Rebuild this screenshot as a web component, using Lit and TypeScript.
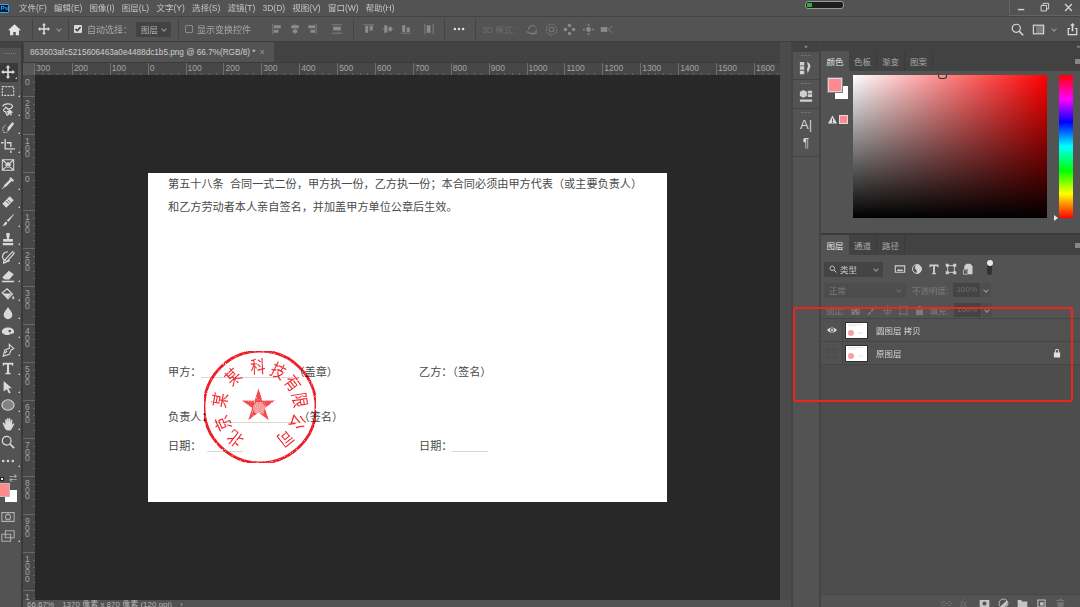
import { LitElement, html, css, svg } from 'lit';
import { customElement } from 'lit/decorators.js';

const ic = (body: unknown, size = 14) => html`<svg class="ic" width=${size} height=${size} viewBox="0 0 16 16" fill="currentColor">${body}</svg>`;

const moveGlyph = svg`<path d="M8 0l2.600 3H9v4h4V5.400l3 2.600-3 2.600V9H9v4h1.600L8 16l-2.600-3H7V9H3v1.600L0 8l3-2.600V7h4V3H5.400z"/>`;

const TOOLS: { icon: unknown; more?: boolean; on?: boolean }[] = [
  { icon: moveGlyph, more: true, on: true },
  { icon: svg`<rect x="1.500" y="3" width="13" height="10" fill="none" stroke="currentColor" stroke-width="1.300" stroke-dasharray="2.200 1.300"/>`, more: true },
  { icon: svg`<path d="M2 5c1-3 9-4 11-1 1 2-2 4-6 4.500M4 8c-2 1-1 3 1 3l2 4 2-1-1.500-3 4 0-6-5z" fill="none" stroke="currentColor" stroke-width="1.400"/><path d="M9 8l5 4-2.500.5 1 2.500-1.500.5-1-2.500L8 14z"/>`, more: true },
  { icon: svg`<path d="M5 5c-3 1-4 5-2 8 2 1 5 0 6-3" fill="none" stroke="currentColor" stroke-width="1" stroke-dasharray="2 1"/><path d="M13 1l2 2-5 7-3 1 1-4z"/>`, more: true },
  { icon: svg`<path d="M4 0h1.500v10.500H16V12H4zM0 3.500h3V5H0zM6.500 3.500H12V9h-1.500V5h-4zM10.500 13H12v3h-1.500z"/>`, more: true },
  { icon: svg`<path d="M1.500 2h13v12h-13z M1.500 2l13 12M14.500 2l-13 12M5 8l3-3 3 3-3 3z" fill="none" stroke="currentColor" stroke-width="1.200"/>` },
  { icon: svg`<path d="M11 1l4 4-2 1.500-.8-.8L6 12l-3 1.500-1 1.500-1-1 1.500-1L4 10l6.300-6.200-.8-.8z"/>`, more: true },
  { icon: svg`<path d="M10 1.500l4.500 4.500L6 14.500 1.500 10z"/><path d="M6 7l3 3M8 5.500l3 3" stroke="#535353" stroke-width="1" fill="none"/>`, more: true },
  { icon: svg`<path d="M14.500 1l.5.500-6.500 8.500-2-1.500zM5.500 9.800l1.700 1.300C7 13.500 4 15 1.500 14.800 3.500 14 3.500 11 5.500 9.800z"/>`, more: true },
  { icon: svg`<path d="M6 1h4v2.500L9 8h4.500v3h-11V8H7L6 3.500zM2 12.500h12V15H2z"/>`, more: true },
  { icon: svg`<path d="M8 2c-4 0-7 3-6 7s6 5 8 3M3 13L13 2c1 0 2 1 2 2L6 14l-3 1z" fill="none" stroke="currentColor" stroke-width="1.300"/>`, more: true },
  { icon: svg`<path d="M9 2l5.500 4-5 6H4L1.500 9.500zM1 13.500h14V15H1z"/>`, more: true },
  { icon: svg`<path d="M1.500 6.500L7 2l6 6-5 5.500z" fill="none" stroke="currentColor" stroke-width="1.400"/><path d="M3 7.500h9l-4.500 5zM14 10c1.500 2 1.500 4 0 4s-1.500-2 0-4z"/>`, more: true },
  { icon: svg`<path d="M8 1c2 3.500 5 6 5 9a5 5 0 0 1-10 0c0-3 3-5.500 5-9z"/>`, more: true },
  { icon: svg`<path d="M1 9c0-3 3-5 7-5s7 2 7 5c0 1-1 2-2 2l-2 0c-1 2-7 2-8 0-1 0-2-1-2-2z"/><circle cx="10" cy="8" r="1.500" fill="#535353"/>`, more: true },
  { icon: svg`<path d="M9.500 1.500l5 5-3 1.500-2 5-7 2 2-7 5-2zM4.500 11.500L7 9" fill="none" stroke="currentColor" stroke-width="1.300"/>`, more: true },
  { icon: svg`<path d="M2 2h12v3.500h-1.200c-.3-1-.8-1.500-2-1.500H9.200v8.500c0 1 .5 1.200 1.800 1.200V15H5v-1.300c1.300 0 1.800-.2 1.800-1.200V4H5.200c-1.200 0-1.700.5-2 1.500H2z"/>`, more: true },
  { icon: svg`<path d="M3 1l9.500 8.500H8.500l2.500 5-2 1-2.300-5L3 13z"/>`, more: true },
  { icon: svg`<ellipse cx="8" cy="8" rx="7" ry="6" fill="currentColor" fill-opacity=".35" stroke="currentColor" stroke-width="1.200"/>`, more: true },
  { icon: svg`<path d="M7 1c1 0 1 .5 1.200 1.500L8.500 6V2c0-1.300 2-1.300 2 0v4.500l.7-3c.3-1.200 2-.8 1.800.4L12.500 9l1-1.300c1-1 2.300 0 1.500 1L12 14c-.7 1-1.500 1.500-3 1.500C6.500 15.500 5 14.500 4 12L2 7.500c-.5-1.200 1-1.800 1.600-.8L5 9 4.800 3.500c0-1.300 1.800-1.300 2 0L7 6z"/>`, more: true },
  { icon: svg`<circle cx="6.500" cy="6.500" r="5" fill="none" stroke="currentColor" stroke-width="1.400"/><path d="M10 10l5 5" stroke="currentColor" stroke-width="2" fill="none"/>` },
  { icon: svg`<circle cx="2.500" cy="8" r="1.400"/><circle cx="8" cy="8" r="1.400"/><circle cx="13.500" cy="8" r="1.400"/>`, more: true },
];

const MENU = ['文件(F)', '编辑(E)', '图像(I)', '图层(L)', '文字(Y)', '选择(S)', '滤镜(T)', '3D(D)', '视图(V)', '窗口(W)', '帮助(H)'];
const HRULER = ['300', '200', '100', '0', '100', '200', '300', '400', '500', '600', '700', '800', '900', '1000', '1100', '1200', '1300', '1400', '1500', '1600'];
const VRULER = ['200', '100', '0', '100', '200', '300', '400', '500', '600', '700', '800', '900', '1000', '1'];

// seal characters with the angle each one sits at, read off the stamp
const SEAL: [string, number][] = [['北', -142], ['京', -114], ['某', -80], ['某', -42], ['科', -3], ['技', 27], ['有', 54], ['限', 80], ['公', 111], ['司', 141]];

const bar = (x: number, y: number, w: number, h: number) => svg`<rect x=${x} y=${y} width=${w} height=${h}/>`;
const ALIGN = [
  [bar(2, 1, 1, 14), bar(4, 3, 9, 4), bar(4, 9, 6, 4)],
  [bar(7.5, 1, 1, 14), bar(3, 3, 10, 4), bar(5, 9, 6, 4)],
  [bar(13, 1, 1, 14), bar(3, 3, 9, 4), bar(6, 9, 6, 4)],
  [bar(1, 2, 14, 1), bar(3, 5, 10, 5), bar(1, 13, 14, 1)],
  [bar(1, 2, 14, 1), bar(3, 4, 4, 9), bar(9, 4, 4, 6)],
  [bar(1, 7.5, 14, 1), bar(3, 3, 4, 10), bar(9, 5, 4, 6)],
  [bar(1, 13, 14, 1), bar(3, 3, 4, 9), bar(9, 6, 4, 6)],
  [bar(2, 1, 1, 14), bar(5, 3, 5, 10), bar(13, 1, 1, 14)],
];
const TD = [
  svg`<path d="M3 8a5 5 0 0 1 9-3M13 8a5 5 0 0 1-9 3M1 10c0 3 9 5 13 2" fill="none" stroke="currentColor" stroke-width="1"/>`,
  svg`<circle cx="8" cy="8" r="6.500" fill="none" stroke="currentColor" stroke-width="1" stroke-dasharray="2 1"/><circle cx="8" cy="8" r="3" fill="none" stroke="currentColor"/>`,
  svg`<circle cx="8" cy="3" r="2.200"/><circle cx="8" cy="13" r="2.200"/><circle cx="3" cy="8" r="2.200"/><circle cx="13" cy="8" r="2.200"/>`,
  svg`<path d="M8 1l2 2H6zM8 15l2-2H6zM1 8l2-2v4zM15 8l-2-2v4z"/><circle cx="8" cy="8" r="3"/>`,
  svg`<rect x="1" y="5" width="8" height="6"/><path d="M10 8l5-4M10 8l5 4" stroke="currentColor" fill="none"/>`,
];
const LOCK = svg`<path d="M4.500 7V5a3.500 3.500 0 0 1 7 0v2H13v8H3V7zM6 7h4V5a2 2 0 0 0-4 0z"/>`;
const FILTERS = [
  svg`<path d="M1 3h14v10H1zM2.500 4.500v7h11v-7zM3.500 10.500l3-3 2 2 1.500-1.500 2.500 2.500z" fill-rule="evenodd"/>`,
  svg`<circle cx="8" cy="8" r="6" fill="none" stroke="currentColor" stroke-width="1.300"/><path d="M8 2a6 6 0 0 1 0 12c-2-1 1-3-1-5s-3-4 1-7z"/>`,
  svg`<path d="M2 2h12v3.500h-1.200c-.3-1-.8-1.300-2-1.300H9.200v8.500c0 .8.500 1 1.500 1V15H5.300v-1.300c1 0 1.500-.2 1.500-1V4.200H5.200c-1.200 0-1.700.3-2 1.300H2z"/>`,
  svg`<path d="M3.500 3.500h9v9h-9z" fill="none" stroke="currentColor" stroke-width="1.200"/><path d="M1 1h4v4H1zM11 1h4v4h-4zM1 11h4v4H1zM11 11h4v4h-4z"/>`,
  svg`<path d="M6 1h5l3 3v11H8V8H3V4z"/><path d="M2 9h5v6H2z" fill="none" stroke="currentColor"/>`,
];
const LOCKS = [
  svg`<path d="M2 3h12v11H2zM3.500 4.500v2h2v-2zM7 4.500v2h2v-2zM10.500 4.500v2h2v-2zM3.500 8v2h2V8zM10.500 8v2h2V8zM7 11v2h2v-2z" fill-rule="evenodd"/>`,
  svg`<path d="M14.500 1l.5.500-6.500 8.500-2-1.500zM5.500 9.800l1.700 1.300C7 13.500 4 15 1.500 14.800 3.500 14 3.500 11 5.500 9.800z"/>`,
  svg`<path d="M7.500 1h1v6.500H15v1H8.500V15h-1V8.500H1v-1h6.500z"/><path d="M4 4h8v8H4z" fill="none" stroke="currentColor"/>`,
  svg`<path d="M3 1v14M13 1v14M1 3h14M1 13h14" fill="none" stroke="currentColor" stroke-width="1.200"/>`,
  LOCK,
];
const FOOT = [
  svg`<path d="M6 5H4a3 3 0 0 0 0 6h2M10 5h2a3 3 0 0 1 0 6h-2M5 8h6" fill="none" stroke="currentColor" stroke-width="1.300"/>`,
  null,
  svg`<path d="M1 3h14v10H1zM8 5a3 3 0 1 0 0 6 3 3 0 0 0 0-6z" fill-rule="evenodd"/>`,
  svg`<circle cx="8" cy="8" r="6.500" fill="none" stroke="currentColor" stroke-width="1.300"/><path d="M12.500 3.500A6.500 6.500 0 0 1 3.500 12.500z"/>`,
  svg`<path d="M1 3h5l1.500 2H15v9H1z"/>`,
  svg`<path d="M2 2h12v12H2zM3.500 3.500v9h9v-9zM6 6h5v5H6z" fill-rule="evenodd"/>`,
  svg`<path d="M6 1h4v2h4v1.500H2V3h4zM3 6h10l-1 9H4z"/>`,
];

const starPoints = (cx: number, cy: number, R: number, r: number) =>
  Array.from({ length: 10 }, (_, i) => {
    const a = (i * Math.PI) / 5;
    const d = i % 2 ? r : R;
    return `${(cx + d * Math.sin(a)).toFixed(1)},${(cy - d * Math.cos(a)).toFixed(1)}`;
  }).join(' ');

@customElement('app-root')
export class AppRoot extends LitElement {
  static styles = css`
    :host {
      display: block;
      width: 1080px;
      height: 607px;
      overflow: hidden;
      font-family: "Liberation Sans", "Noto Sans CJK SC", sans-serif;
      font-size: 8.500px;
      color: #c4c4c4;
      background: #535353;
    }
    .app { width: 1080px; height: 607px; display: flex; flex-direction: column; position: relative; filter: blur(0.4px); }
    .ic { display: block; flex: none; }

    .menubar { height: 16px; flex: none; display: flex; align-items: center; background: #535353; border-bottom: 1px solid #434343; position: relative; }
    .ps { width: 9px; height: 9px; background: #001e36; color: #31a8ff; font-size: 6px; font-weight: bold; border: 1px solid #31a8ff; border-left: 0; border-radius: 0 2px 2px 0; display: flex; align-items: center; justify-content: flex-end; line-height: 1; box-sizing: border-box; margin-right: 10px; overflow: hidden; flex: none; }
    .menu { display: flex; gap: 7.200px; white-space: nowrap; line-height: 16px; }
    .battery { position: absolute; left: 805px; top: 1px; width: 39px; height: 8px; box-sizing: border-box; border: 1px solid #9a9a9a; border-radius: 3px; background: #1d1d1d; display: flex; padding: 1px; }
    .battery i { width: 5px; background: #2fae3c; }
    .winctl { margin-left: auto; width: 71px; height: 16px; flex: none; display: flex; align-items: center; justify-content: space-around; border-left: 1px solid #646464; border-bottom: 1px solid #646464; box-sizing: border-box; color: #d6d6d6; }

    .options { height: 25px; flex: none; display: flex; align-items: center; background: #535353; border-bottom: 1px solid #3e3e3e; box-sizing: border-box; position: relative; }
    .sep { width: 1px; height: 20px; background: #434343; flex: none; }
    .home { margin: 0 11px 0 8px; color: #e4e4e4; }
    .movebtn { margin: 0 7px 0 5px; color: #ddd; }
    .chev { width: 3px; height: 3px; border-right: 1px solid #999; border-bottom: 1px solid #999; transform: rotate(45deg); flex: none; }
    .check { width: 8px; height: 8px; border-radius: 1px; background: #d8d8d8; color: #333; flex: none; display: flex; align-items: center; justify-content: center; }
    .check.off { background: transparent; border: 1px solid #8a8a8a; box-sizing: border-box; }
    .select { display: flex; align-items: center; background: #434343; height: 15px; box-sizing: border-box; padding: 0 5px; flex: none; }
    .opt-label { color: #a8a8a8; white-space: nowrap; flex: none; font-size: 9px; }
    .layer-select { width: 35px; color: #b4b4b4; }
    .layer-select .chev { margin-left: auto; }
    .tdlabel { width: 44px; margin-left: 6px; white-space: nowrap; color: #6f6f6f; flex: none; }
    .tdicons { display: flex; gap: 5.500px; color: #8a8a8a; }
    .aligns { display: flex; color: #8c8c8c; flex: none; }
    .dots { margin: 0 10px 0 8px; color: #e0e0e0; }
    .right-tools { margin-left: auto; display: flex; align-items: center; gap: 8px; color: #dcdcdc; padding-right: 1.500px; }
    .right-tools .chev { margin: 0 2px 0 -1px; }

    .workspace { flex: 1; display: flex; min-height: 0; }
    .toolbar { width: 21px; flex: none; display: flex; flex-direction: column; align-items: stretch; border-right: 2px solid #3a3a3a; background: #535353; }
    .toolhead { height: 21px; flex: none; background: linear-gradient(#424242 0 6px, #535353 6px); position: relative; }
    .toolhead::after { content: ""; position: absolute; left: 3px; right: 5px; top: 11px; border-top: 1px dotted #7a7a7a; }
    .tool { height: 18.500px; flex: none; display: flex; align-items: center; justify-content: center; color: #d9d9d9; position: relative; padding-right: 5px; box-sizing: border-box; }
    .tool.on { background: #3a3a3a; margin-right: 3px; padding-right: 2px; }
    .tool.more::after { content: ""; position: absolute; right: 1px; bottom: 3px; border: 1px solid transparent; border-right-color: #ccc; border-bottom-color: #ccc; }
    .swap { height: 12px; margin-top: 3px; display: flex; align-items: center; justify-content: space-between; padding: 0 4px 0 0; }
    .swap i { width: 4px; height: 4px; background: #e8e8e8; border: 1px solid #222; box-sizing: border-box; }
    .swap b { font-size: 8px; font-weight: normal; color: #d0d0d0; line-height: 1; }
    .colors { height: 20px; flex: none; margin-top: -2px; }
    .colors .fg { width: 10px; height: 14px; background: #ff8a8e; border: 1px solid #bdbdbd; border-left: 0; box-sizing: border-box; position: relative; z-index: 1; }
    .colors .bg { width: 12px; height: 12px; background: #fff; margin: -7px 0 0 5px; }
    .tool.small { color: #b0b0b0; }
    .mask { margin-top: 5px; }

    .docarea { width: 757px; flex: none; display: flex; flex-direction: column; background: #424242; }
    .tabs { height: 20px; flex: none; display: flex; background: #424242; }
    .tab { width: 250px; margin-left: 1px; box-sizing: border-box; background: #535353; display: flex; align-items: center; padding: 0 6px; white-space: nowrap; gap: 4px; color: #cfcfcf; font-size: 8.200px; }
    .tab span { color: #999; font-size: 9px; }
    .hruler { height: 13px; flex: none; display: flex; background: #474747; border-top: 1px solid #3a3a3a; box-sizing: border-box; overflow: hidden; }
    .corner { width: 11px; flex: none; background: #585858; }
    .rcell { width: 37.900px; flex: none; box-sizing: border-box; border-left: 1px solid #6e6e6e; padding-left: 1px; font-size: 8.500px; line-height: 11px; color: #a4a4a4; background: repeating-linear-gradient(90deg, transparent 0 6.580px, #666 6.580px 7.580px) 0 100% / 100% 2px no-repeat; }
    .mid { flex: 1; display: flex; min-height: 0; }
    .vruler { width: 12px; flex: none; background: #474747; display: flex; flex-direction: column; overflow: hidden; }
    .vcell { flex: none; height: 38px; box-sizing: border-box; border-top: 1px solid #686868; padding: 3px 0 0 2px; font-size: 8.500px; line-height: 6.700px; color: #a4a4a4; background: repeating-linear-gradient(180deg, transparent 0 6.600px, #666 6.600px 7.600px) 100% 0 / 2px 100% no-repeat; }
    .vcell.first { height: 21px; border-top: 0; padding-top: 4px; }
    .canvas { flex: 1; background: #282828; padding: 98px 0 0 113px; box-sizing: border-box; overflow: hidden; }
    .status { height: 7px; flex: none; background: #515151; display: flex; gap: 8px; padding-left: 4px; font-size: 8px; line-height: 9px; color: #b4b4b4; white-space: nowrap; overflow: hidden; }

    .doc { width: 519px; height: 329px; background: #fff; position: relative; box-sizing: border-box; padding-left: 20px; font-size: 11.150px; color: #4a4a4a; }
    .doc p { margin: 0; line-height: 23px; white-space: nowrap; }
    .sign { display: grid; grid-template-columns: 251px 1fr; line-height: 23px; height: 23px; white-space: nowrap; }
    .sign.a { margin-top: 141.500px; }
    .sign.b { margin-top: 22px; }
    .sign.c { margin-top: 6px; }
    .line { display: inline-block; height: 10px; border-bottom: 1px solid #d8d8d8; vertical-align: -2px; }
    .seal { position: absolute; left: 51.500px; top: 173.500px; mix-blend-mode: multiply; }

    .gutter { width: 11px; flex: none; background: #4b4b4b; display: flex; align-items: flex-end; }
    .gutter::after { content: ""; width: 100%; height: 7px; background: #515151; }
    .dockcol { width: 30px; flex: none; display: flex; flex-direction: column; background: #444; border-left: 2px solid #444; border-right: 2px solid #444; box-sizing: border-box; }
    .collapse { height: 9px; flex: none; background: #424242; color: #bbb; font-size: 6px; line-height: 8px; text-align: center; margin-bottom: 1px; }
    .dgroup { background: #535353; display: flex; flex-direction: column; align-items: center; gap: 6px; padding: 9px 0 4px; margin-bottom: 1px; box-sizing: border-box; color: #d0d0d0; flex: none; position: relative; }
    .dgroup::before { content: ""; position: absolute; top: 3px; left: 8px; right: 8px; border-top: 1px dotted #7a7a7a; }
    .dgroup.fill { flex: 1; margin: 0; padding: 0; }
    .dgroup.fill::before { display: none; }
    .dgroup b { font: 13px "Liberation Sans", sans-serif; line-height: 13px; color: #d8d8d8; }

    .panels { flex: 1; display: flex; flex-direction: column; min-width: 0; }
    .ptop { height: 9px; flex: none; background: #424242; color: #bbb; font-size: 6px; line-height: 8px; text-align: right; }
    .ptabs { height: 20px; flex: none; display: flex; background: #424242; position: relative; align-items: stretch; }
    .ptab { width: 28px; display: flex; align-items: center; justify-content: center; color: #a8a8a8; border-right: 1px solid #3a3a3a; box-sizing: border-box; }
    .ptab.on { background: #535353; color: #e4e4e4; border-right: 0; }
    .pmenu { margin-left: auto; width: 5px; height: 5px; background: #868686; align-self: center; }
    .color { height: 162px; flex: none; background: #535353; display: flex; border-bottom: 2px solid #3a3a3a; }
    .swatches { width: 32px; flex: none; padding: 7px 0 0 7px; box-sizing: border-box; }
    .sw-fg { width: 14px; height: 14px; background: #ff8a8e; border: 1px solid #d8d8d8; outline: 1px solid #808080; box-sizing: border-box; position: relative; z-index: 1; }
    .sw-bg { width: 13px; height: 13px; background: #fff; margin: -6px 0 0 7px; }
    .warn { display: flex; align-items: center; gap: 2px; margin-top: 16px; color: #e0e0e0; }
    .warn i { width: 9px; height: 9px; background: #ff8a8e; border: 1px solid #ddd; box-sizing: border-box; }
    .field { width: 194px; height: 143px; margin-top: 4px; flex: none; position: relative; background: linear-gradient(to top, #000, transparent), linear-gradient(to right, #fff, #f00); }
    .pick { position: absolute; left: 85px; top: -1px; width: 7px; height: 4px; border: 1px solid #333; border-top: 0; border-radius: 0 0 3px 3px; }
    .hue { width: 14px; height: 143px; margin: 4px 0 0 12px; flex: none; position: relative; background: linear-gradient(to bottom, #f00, #f0f 17%, #00f 33%, #0ff 50%, #0f0 67%, #ff0 83%, #f00); }
    .hue i { position: absolute; left: -5px; bottom: -3px; border-left: 4px solid #e8e8e8; border-top: 3px solid transparent; border-bottom: 3px solid transparent; }

    .layers { flex: 1; background: #535353; display: flex; flex-direction: column; min-height: 0; }
    .lrow { display: flex; align-items: center; height: 14px; margin-top: 7px; flex: none; padding-left: 3px; color: #7c7c7c; white-space: nowrap; }
    .lrow.locks { margin-top: 6px; padding-left: 5px; }
    .lrow .select { margin-right: 6px; }
    .kind { width: 59px; color: #c8c8c8; background: #444; gap: 3px; margin-right: 11px !important; padding: 0 5px; }
    .kind .chev { margin-left: auto; }
    .ficons { display: flex; gap: 5px; color: #d0d0d0; align-items: center; }
    .toggle { width: 5px; height: 12px; border-radius: 3px; background: #333; margin-left: 8px; position: relative; }
    .toggle::before { content: ""; position: absolute; left: -0.500px; top: -3px; width: 6px; height: 6px; border-radius: 50%; background: #e8e8e8; }
    .blend { width: 82px; background: #4d4d4d; color: #7c7c7c; padding-left: 5px; }
    .blend .chev { margin-left: auto; border-color: #6e6e6e; }
    .num { width: 27px; height: 14px; background: #444; color: #6e6e6e; font-size: 8px; line-height: 14px; text-align: center; margin: 0 1px 0 5px; flex: none; }
    .numchev { width: 10px; height: 14px; background: #4d4d4d; display: flex; align-items: center; justify-content: center; }
    .lock-icons { display: flex; gap: 5px; margin: 0 4px 0 5px; color: #7c7c7c; }
    .list { flex: 1; margin-top: 1px; border-top: 1px solid #464646; background: #4d4d4d; }
    .layer { height: 22px; display: flex; align-items: center; border-bottom: 1px solid #464646; color: #d4d4d4; background: #515151; }
    .vis { width: 21px; height: 100%; flex: none; border-right: 1px solid #464646; display: flex; align-items: center; justify-content: center; margin-right: 3px; }
    .nobox { width: 9px; height: 9px; border: 1px solid #484848; box-sizing: border-box; }
    .thumb { display: block; flex: none; outline: 1px solid #2e2e2e; margin-right: 9px; }
    .lname { flex: 1; }
    .llock { margin-right: 18px; color: #e0e0e0; }
    .lfoot { height: 13px; flex: none; border-top: 1px solid #464646; box-sizing: border-box; display: flex; align-items: flex-start; justify-content: flex-end; gap: 8px; padding: 3px 14px 0 0; color: #c4c4c4; }
    .lfoot .off { color: #747474; }
    .lfoot em { font: italic 10px "Liberation Serif", serif; color: #747474; width: 11px; line-height: 11px; }

    .annot { position: absolute; left: 793px; top: 307px; width: 280px; height: 95px; border: 2px solid #ee2518; border-radius: 2px; box-sizing: border-box; }
  `;

  private thumb() {
    return svg`<svg class="thumb" width="21" height="15" viewBox="0 0 21 15">
      <rect width="21" height="15" fill="#fff"/>
      <path d="M2 1.500h15M2 3h8" stroke="#d8d8d8" stroke-width=".6"/>
      <path d="M12 10h5" stroke="#ddd" stroke-width=".8"/>
      <circle cx="5" cy="10" r="3" fill="#f6a0a6"/>
    </svg>`;
  }

  private seal() {
    return html`<svg class="seal" width="120" height="120" viewBox="0 0 120 120">
      <defs>
        <filter id="grain" x="0" y="0" width="100%" height="100%">
          <feTurbulence type="fractalNoise" baseFrequency="0.9" numOctaves="2" seed="4"/>
          <feColorMatrix values="0 0 0 0 0  0 0 0 0 0  0 0 0 0 0  0 0 0 -4 3.400"/>
          <feComposite in="SourceGraphic" operator="in"/>
        </filter>
      </defs>
      <g filter="url(#grain)" fill="#f02a30">
        <circle cx="60" cy="60" r="56" fill="none" stroke="#ee1c25" stroke-width="2.800"/>
        <polygon points=${starPoints(58.5, 59, 17.5, 6.6)} fill-opacity=".85"/>
        <circle cx="59" cy="61" r="6" fill="#fff" fill-opacity=".45"/>
        ${SEAL.map(([ch, deg]) => svg`<text transform="rotate(${deg} 60 60) translate(60 18.500) scale(.88 1.050)" font-family="'Noto Sans CJK SC', sans-serif" font-size="17" text-anchor="middle" dominant-baseline="central">${ch}</text>`)}
      </g>
    </svg>`;
  }

  render() {
    return html`<div class="app">
      <div class="menubar">
        <div class="ps">Ps</div>
        <div class="menu">${MENU.map(m => html`<span>${m}</span>`)}</div>
        <div class="battery"><i></i></div>
        <div class="winctl">
          ${ic(svg`<rect x="3" y="10" width="9" height="2"/>`, 11)}
          ${ic(svg`<path d="M3 5h8v8H3zM6 5V2h8v8h-3" fill="none" stroke="currentColor" stroke-width="1.400"/>`, 11)}
          ${ic(svg`<path d="M3 3l10 10M13 3L3 13" stroke="currentColor" stroke-width="1.800" fill="none"/>`, 11)}
        </div>
      </div>

      <div class="options">
        <div class="home">${ic(svg`<path d="M8 1.500L16 9h-2.500v6H9.500v-4h-3v4H2.500V9H0z"/>`, 13)}</div>
        <div class="sep"></div>
        <div class="movebtn">${ic(moveGlyph, 12)}</div>
        <div class="chev"></div>
        <div class="sep" style="margin:0 5px 0 7px"></div>
        <div class="check">${ic(svg`<path d="M3 8l3.500 3.500L13 4.500" stroke="currentColor" stroke-width="3" fill="none"/>`, 8)}</div>
        <span class="opt-label" style="margin:0 4px 0 5px">自动选择：</span>
        <div class="select layer-select">图层<span class="chev"></span></div>
        <div class="sep" style="margin:0 6px 0 7px"></div>
        <div class="check off"></div>
        <span class="opt-label" style="margin-left:4px;width:74px">显示变换控件</span>
        <div class="aligns" style="gap:5.500px">${ALIGN.slice(0, 3).map(a => ic(a, 12))}</div>
        <div class="aligns" style="margin-left:13px">${ic(ALIGN[3], 12)}</div>
        <div class="sep" style="margin:0 9px 0 10px"></div>
        <div class="aligns" style="gap:6.500px">${ALIGN.slice(4, 7).map(a => ic(a, 12))}</div>
        <div class="aligns" style="margin-left:11px">${ic(ALIGN[7], 12)}</div>
        <div class="sep" style="margin-left:9px"></div>
        <div class="dots">${ic(svg`<circle cx="2.500" cy="8" r="1.700"/><circle cx="8" cy="8" r="1.700"/><circle cx="13.500" cy="8" r="1.700"/>`, 12)}</div>
        <div class="sep"></div>
        <span class="tdlabel">3D 模式：</span>
        <div class="tdicons">${TD.map(t => ic(t, 13))}</div>
        <div class="right-tools">
          ${ic(svg`<circle cx="6.500" cy="6.500" r="5" fill="none" stroke="currentColor" stroke-width="1.400"/><path d="M10 10l5 5" stroke="currentColor" stroke-width="1.800" fill="none"/>`, 13)}
          ${ic(svg`<rect x="1.700" y="2.700" width="12.600" height="10.600" fill="none" stroke="currentColor" stroke-width="1.400"/><rect x="5" y="3" width="9" height="10" opacity=".3"/>`, 13)}
          <div class="chev"></div>
          ${ic(svg`<path d="M8 0l3 3H9v7H7V3H5zM2 6h3v1.500H3.500v6h9v-6H11V6h3v9H2z"/>`, 13)}
        </div>
      </div>

      <div class="workspace">
        <div class="toolbar">
          <div class="toolhead"></div>
          ${TOOLS.map(t => html`<div class="tool ${t.more ? 'more' : ''} ${t.on ? 'on' : ''}">${ic(t.icon)}</div>`)}
          <div class="swap"><i></i><b>⇄</b></div>
          <div class="colors"><div class="fg"></div><div class="bg"></div></div>
          <div class="tool small mask">${ic(svg`<path d="M1 3h14v10H1zM8 5a3 3 0 1 0 0 6 3 3 0 0 0 0-6z" fill="none" stroke="currentColor" stroke-width="1.200"/>`)}</div>
          <div class="tool small more">${ic(svg`<path d="M5 2h10v8H5zM1 6h10v8H1z" fill="none" stroke="currentColor" stroke-width="1.200"/>`)}</div>
        </div>

        <div class="docarea">
          <div class="tabs"><div class="tab">863603afc5215606463a0e4488dc1b5.png @ 66.7%(RGB/8) * <span>×</span></div></div>
          <div class="hruler"><div class="corner"></div>${HRULER.map(r => html`<div class="rcell">${r}</div>`)}</div>
          <div class="mid">
            <div class="vruler">
              <div class="vcell first">0</div>
              ${VRULER.map(r => html`<div class="vcell">${r.split('').map(d => html`<div>${d}</div>`)}</div>`)}
            </div>
            <div class="canvas">
              <div class="doc">
                <p>第五十八条&nbsp;&nbsp;合同一式二份，甲方执一份，乙方执一份；本合同必须由甲方代表（或主要负责人）</p>
                <p>和乙方劳动者本人亲自签名，并加盖甲方单位公章后生效。</p>
                <div class="sign a"><div>甲方：<span class="line" style="width:92px"></span>（盖章）</div><div>乙方：（签名）</div></div>
                <div class="sign b"><div>负责人：<span class="line" style="width:86px"></span>（签名）</div><div></div></div>
                <div class="sign c"><div>日期：<span class="line" style="width:36px;margin-left:6px"></span></div><div>日期：<span class="line" style="width:36px"></span></div></div>
                ${this.seal()}
              </div>
            </div>
          </div>
          <div class="status"><span>66.67%</span><span>1370 像素 x 870 像素 (120 ppi)</span><span>›</span></div>
        </div>

        <div class="gutter"></div>

        <div class="dockcol">
          <div class="collapse">«</div>
          <div class="dgroup" style="height:27px">${ic(svg`<path d="M1 1h5v4H1zM1 6h5v4H1zM1 11h5v4H1zM9 1c4 1 5 5 3 8l-2 5-1-5c2-2 1-5 0-8z"/>`)}</div>
          <div class="dgroup" style="height:28px">${ic(svg`<path d="M5 1l4 2v5l-4 2-4-2V3zM10 2h5v3h-5zM10 6h5v3h-5zM1 12h14v2.500H1z"/>`)}</div>
          <div class="dgroup" style="height:47px"><b>A|</b><b style="font-size:12px">¶</b></div>
          <div class="dgroup fill"></div>
        </div>

        <div class="panels">
          <div class="ptop">»</div>
          <div class="ptabs">
            <div class="ptab on">颜色</div><div class="ptab">色板</div><div class="ptab">渐变</div><div class="ptab">图案</div>
            <div class="pmenu"></div>
          </div>
          <div class="color">
            <div class="swatches">
              <div class="sw-fg"></div><div class="sw-bg"></div>
              <div class="warn">${ic(svg`<path d="M8 1l8 14H0zM7 6v5h2V6zM7 12v2h2v-2z" fill-rule="evenodd"/>`, 9)}<i></i></div>
            </div>
            <div class="field"><div class="pick"></div></div>
            <div class="hue"><i></i></div>
          </div>
          <div class="ptabs">
            <div class="ptab on">图层</div><div class="ptab">通道</div><div class="ptab">路径</div><div class="ptab" style="border:0"></div>
            <div class="pmenu"></div>
          </div>
          <div class="layers">
            <div class="lrow">
              <div class="select kind">${ic(svg`<circle cx="6.500" cy="6.500" r="4.500" fill="none" stroke="currentColor" stroke-width="1.800"/><path d="M10 10l5 5" stroke="currentColor" stroke-width="2" fill="none"/>`, 8)}类型<span class="chev"></span></div>
              <div class="ficons">${FILTERS.map(f => ic(f, 12))}<div class="toggle"></div></div>
            </div>
            <div class="lrow">
              <div class="select blend">正常<span class="chev"></span></div>
              <span>不透明度:</span><div class="num">100%</div><div class="numchev"><span class="chev"></span></div>
            </div>
            <div class="lrow locks">
              <span>锁定:</span>
              <div class="lock-icons">${LOCKS.map(l => ic(l, 11))}</div>
              <span>填充:</span><div class="num">100%</div><div class="numchev"><span class="chev"></span></div>
            </div>
            <div class="list">
              <div class="layer">
                <div class="vis">${ic(svg`<path d="M0 8c4-5.500 12-5.500 16 0-4 5.500-12 5.500-16 0zM8 4.800a3.200 3.200 0 1 0 0 6.400 3.200 3.200 0 0 0 0-6.400z" fill-rule="evenodd"/><circle cx="8" cy="8" r="1.800"/>`, 10)}</div>
                ${this.thumb()}<span class="lname">圆图层 拷贝</span>
              </div>
              <div class="layer">
                <div class="vis"><div class="nobox"></div></div>
                ${this.thumb()}<span class="lname">原图层</span>
                <div class="llock">${ic(LOCK, 10)}</div>
              </div>
            </div>
            <div class="lfoot">
              ${FOOT.map((f, i) => f ? html`<span class=${i === 0 || i === 6 ? 'off' : ''}>${ic(f, 11)}</span>` : html`<em>fx</em>`)}
            </div>
          </div>
        </div>
      </div>

      <div class="annot"></div>
    </div>`;
  }
}
